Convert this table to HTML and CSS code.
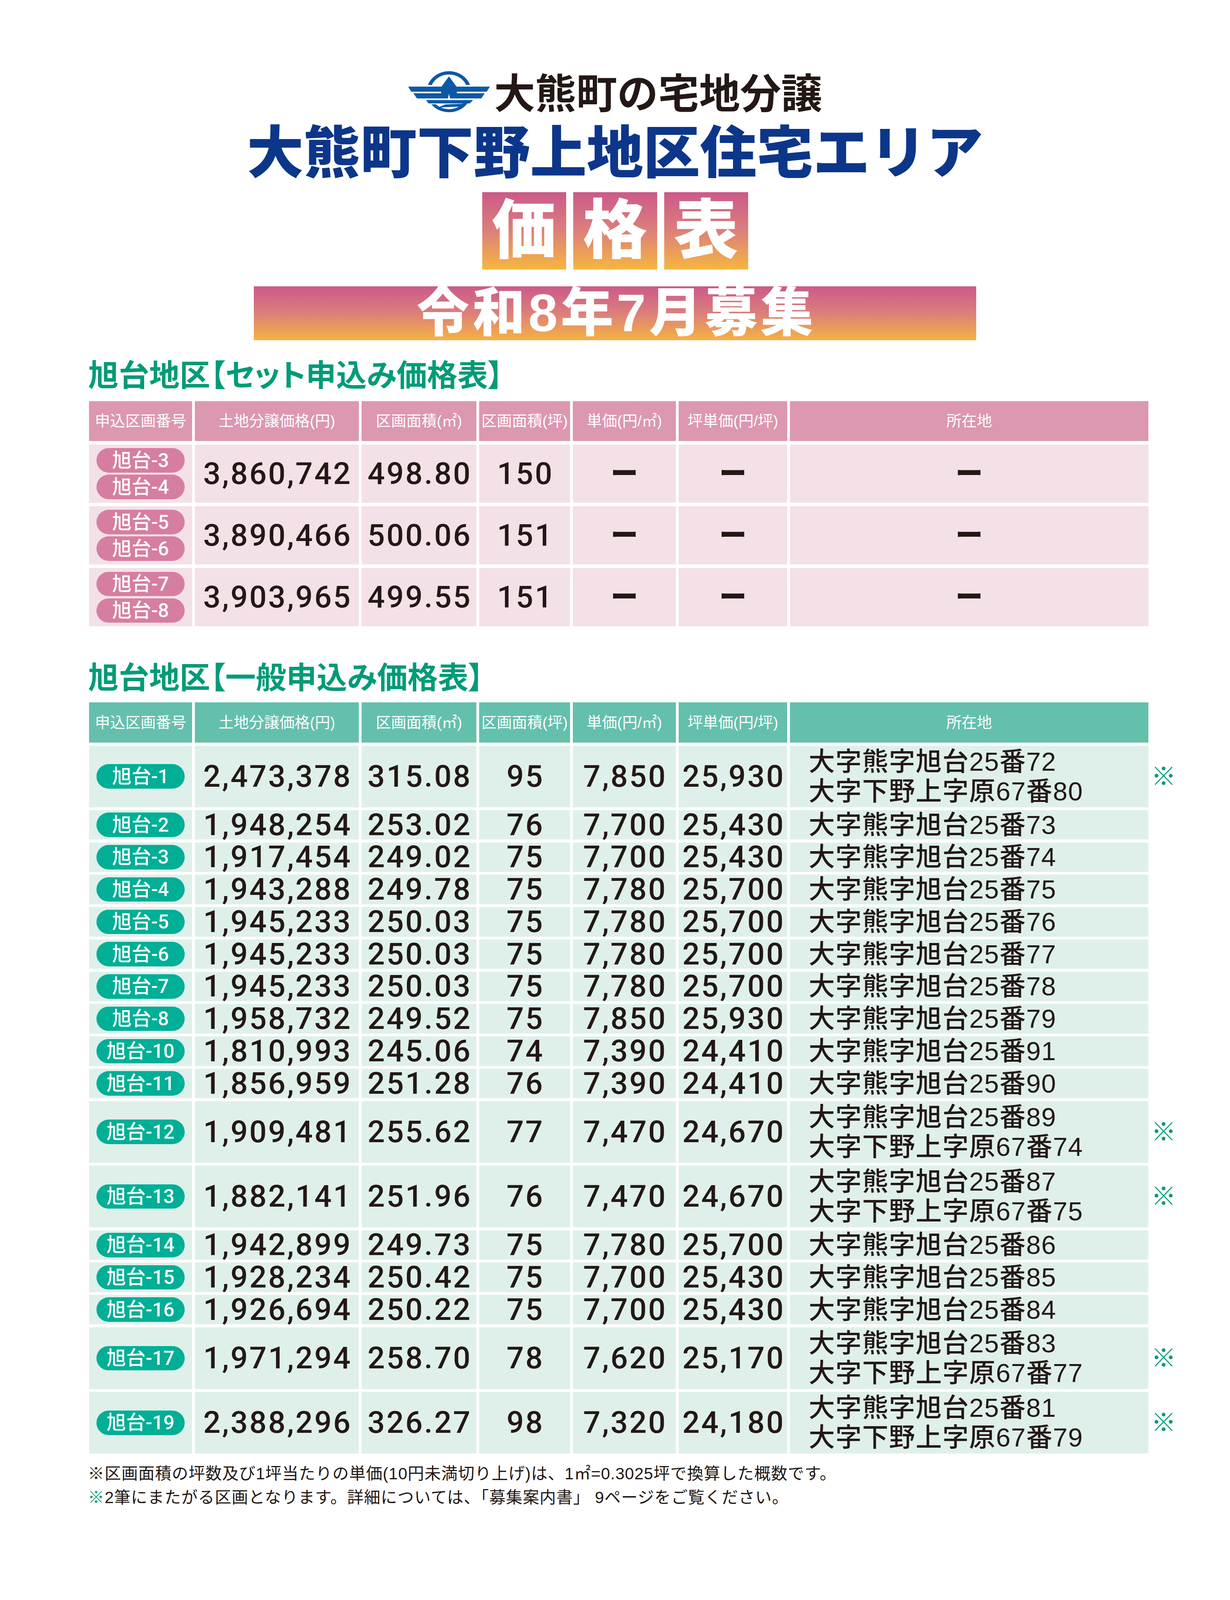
FILE: index.html
```html
<!DOCTYPE html>
<html lang="ja">
<head>
<meta charset="utf-8">
<title>大熊町下野上地区住宅エリア 価格表</title>
<link rel="stylesheet" href="styles.css">
</head>
<body>
<div class="page">
  <header class="brand">
    <svg class="logo" viewBox="28 38 644 354" preserveAspectRatio="none" aria-hidden="true">
      <g fill="#0d58a6">
        <path d="M184.7 158 A173 173 0 0 1 511.3 158 L480.5 158 A144 144 0 0 0 215.5 158 Z"/>
        <polygon points="348,86 406,172 412,272 284,272 290,172"/>
        <polygon points="32,172 665,172 640,215 55,215"/>
        <polygon points="72,228 625,228 598,272 100,272"/>
        <polygon points="170,286 535,286 508,314 190,314"/>
        <path d="M211.3 321 A173 173 0 0 0 498.7 300 L467.9 300 A147 147 0 0 1 246.2 321 Z"/>
        <polygon points="456,316 322,322 250,352 305,346 432,341"/>
      </g>
      <polygon fill="#ffffff" points="348,232 356,272 340,272"/>
    </svg>
    <span class="brand-name">大熊町の宅地分譲</span>
  </header>

  <h1 class="title">大熊町下野上地区住宅エリア</h1>

  <div class="kakaku"><span>価</span><span>格</span><span>表</span></div>

  <div class="banner">令和8年7月募集</div>

  <h2 class="sec-title first">旭台地区【セット申込み価格表】</h2>
  <div class="tbl pink">
    <div class="row head">
      <div class="cell">申込区画番号</div>
      <div class="cell">土地分譲価格(円)</div>
      <div class="cell">区画面積(㎡)</div>
      <div class="cell">区画面積(坪)</div>
      <div class="cell">単価(円/㎡)</div>
      <div class="cell">坪単価(円/坪)</div>
      <div class="cell">所在地</div>
      <div class="mk"></div>
    </div>
    <div class="row set">
      <div class="cell badges"><span class="badge">旭台-3</span><span class="badge">旭台-4</span></div>
      <div class="cell num">3,860,742</div>
      <div class="cell num">498.80</div>
      <div class="cell num">150</div>
      <div class="cell dash">ー</div>
      <div class="cell dash">ー</div>
      <div class="cell dash">ー</div>
      <div class="mk"></div>
    </div>
    <div class="row set">
      <div class="cell badges"><span class="badge">旭台-5</span><span class="badge">旭台-6</span></div>
      <div class="cell num">3,890,466</div>
      <div class="cell num">500.06</div>
      <div class="cell num">151</div>
      <div class="cell dash">ー</div>
      <div class="cell dash">ー</div>
      <div class="cell dash">ー</div>
      <div class="mk"></div>
    </div>
    <div class="row set">
      <div class="cell badges"><span class="badge">旭台-7</span><span class="badge">旭台-8</span></div>
      <div class="cell num">3,903,965</div>
      <div class="cell num">499.55</div>
      <div class="cell num">151</div>
      <div class="cell dash">ー</div>
      <div class="cell dash">ー</div>
      <div class="cell dash">ー</div>
      <div class="mk"></div>
    </div>
  </div>

  <h2 class="sec-title second">旭台地区【一般申込み価格表】</h2>
  <div class="tbl green">
    <div class="row head">
      <div class="cell">申込区画番号</div>
      <div class="cell">土地分譲価格(円)</div>
      <div class="cell">区画面積(㎡)</div>
      <div class="cell">区画面積(坪)</div>
      <div class="cell">単価(円/㎡)</div>
      <div class="cell">坪単価(円/坪)</div>
      <div class="cell">所在地</div>
      <div class="mk"></div>
    </div>

    <div class="row dbl">
      <div class="cell"><span class="badge">旭台-1</span></div>
      <div class="cell num">2,473,378</div><div class="cell num">315.08</div><div class="cell num">95</div>
      <div class="cell num">7,850</div><div class="cell num">25,930</div>
      <div class="cell addr"><span>大字熊字旭台25番72</span><span>大字下野上字原67番80</span></div>
      <div class="mk">※</div>
    </div>
    <div class="row sgl">
      <div class="cell"><span class="badge">旭台-2</span></div>
      <div class="cell num">1,948,254</div><div class="cell num">253.02</div><div class="cell num">76</div>
      <div class="cell num">7,700</div><div class="cell num">25,430</div>
      <div class="cell addr"><span>大字熊字旭台25番73</span></div>
      <div class="mk"></div>
    </div>
    <div class="row sgl">
      <div class="cell"><span class="badge">旭台-3</span></div>
      <div class="cell num">1,917,454</div><div class="cell num">249.02</div><div class="cell num">75</div>
      <div class="cell num">7,700</div><div class="cell num">25,430</div>
      <div class="cell addr"><span>大字熊字旭台25番74</span></div>
      <div class="mk"></div>
    </div>
    <div class="row sgl">
      <div class="cell"><span class="badge">旭台-4</span></div>
      <div class="cell num">1,943,288</div><div class="cell num">249.78</div><div class="cell num">75</div>
      <div class="cell num">7,780</div><div class="cell num">25,700</div>
      <div class="cell addr"><span>大字熊字旭台25番75</span></div>
      <div class="mk"></div>
    </div>
    <div class="row sgl">
      <div class="cell"><span class="badge">旭台-5</span></div>
      <div class="cell num">1,945,233</div><div class="cell num">250.03</div><div class="cell num">75</div>
      <div class="cell num">7,780</div><div class="cell num">25,700</div>
      <div class="cell addr"><span>大字熊字旭台25番76</span></div>
      <div class="mk"></div>
    </div>
    <div class="row sgl">
      <div class="cell"><span class="badge">旭台-6</span></div>
      <div class="cell num">1,945,233</div><div class="cell num">250.03</div><div class="cell num">75</div>
      <div class="cell num">7,780</div><div class="cell num">25,700</div>
      <div class="cell addr"><span>大字熊字旭台25番77</span></div>
      <div class="mk"></div>
    </div>
    <div class="row sgl">
      <div class="cell"><span class="badge">旭台-7</span></div>
      <div class="cell num">1,945,233</div><div class="cell num">250.03</div><div class="cell num">75</div>
      <div class="cell num">7,780</div><div class="cell num">25,700</div>
      <div class="cell addr"><span>大字熊字旭台25番78</span></div>
      <div class="mk"></div>
    </div>
    <div class="row sgl">
      <div class="cell"><span class="badge">旭台-8</span></div>
      <div class="cell num">1,958,732</div><div class="cell num">249.52</div><div class="cell num">75</div>
      <div class="cell num">7,850</div><div class="cell num">25,930</div>
      <div class="cell addr"><span>大字熊字旭台25番79</span></div>
      <div class="mk"></div>
    </div>
    <div class="row sgl">
      <div class="cell"><span class="badge">旭台-10</span></div>
      <div class="cell num">1,810,993</div><div class="cell num">245.06</div><div class="cell num">74</div>
      <div class="cell num">7,390</div><div class="cell num">24,410</div>
      <div class="cell addr"><span>大字熊字旭台25番91</span></div>
      <div class="mk"></div>
    </div>
    <div class="row sgl">
      <div class="cell"><span class="badge">旭台-11</span></div>
      <div class="cell num">1,856,959</div><div class="cell num">251.28</div><div class="cell num">76</div>
      <div class="cell num">7,390</div><div class="cell num">24,410</div>
      <div class="cell addr"><span>大字熊字旭台25番90</span></div>
      <div class="mk"></div>
    </div>
    <div class="row dbl">
      <div class="cell"><span class="badge">旭台-12</span></div>
      <div class="cell num">1,909,481</div><div class="cell num">255.62</div><div class="cell num">77</div>
      <div class="cell num">7,470</div><div class="cell num">24,670</div>
      <div class="cell addr"><span>大字熊字旭台25番89</span><span>大字下野上字原67番74</span></div>
      <div class="mk">※</div>
    </div>
    <div class="row dbl">
      <div class="cell"><span class="badge">旭台-13</span></div>
      <div class="cell num">1,882,141</div><div class="cell num">251.96</div><div class="cell num">76</div>
      <div class="cell num">7,470</div><div class="cell num">24,670</div>
      <div class="cell addr"><span>大字熊字旭台25番87</span><span>大字下野上字原67番75</span></div>
      <div class="mk">※</div>
    </div>
    <div class="row sgl">
      <div class="cell"><span class="badge">旭台-14</span></div>
      <div class="cell num">1,942,899</div><div class="cell num">249.73</div><div class="cell num">75</div>
      <div class="cell num">7,780</div><div class="cell num">25,700</div>
      <div class="cell addr"><span>大字熊字旭台25番86</span></div>
      <div class="mk"></div>
    </div>
    <div class="row sgl">
      <div class="cell"><span class="badge">旭台-15</span></div>
      <div class="cell num">1,928,234</div><div class="cell num">250.42</div><div class="cell num">75</div>
      <div class="cell num">7,700</div><div class="cell num">25,430</div>
      <div class="cell addr"><span>大字熊字旭台25番85</span></div>
      <div class="mk"></div>
    </div>
    <div class="row sgl">
      <div class="cell"><span class="badge">旭台-16</span></div>
      <div class="cell num">1,926,694</div><div class="cell num">250.22</div><div class="cell num">75</div>
      <div class="cell num">7,700</div><div class="cell num">25,430</div>
      <div class="cell addr"><span>大字熊字旭台25番84</span></div>
      <div class="mk"></div>
    </div>
    <div class="row dbl">
      <div class="cell"><span class="badge">旭台-17</span></div>
      <div class="cell num">1,971,294</div><div class="cell num">258.70</div><div class="cell num">78</div>
      <div class="cell num">7,620</div><div class="cell num">25,170</div>
      <div class="cell addr"><span>大字熊字旭台25番83</span><span>大字下野上字原67番77</span></div>
      <div class="mk">※</div>
    </div>
    <div class="row dbl">
      <div class="cell"><span class="badge">旭台-19</span></div>
      <div class="cell num">2,388,296</div><div class="cell num">326.27</div><div class="cell num">98</div>
      <div class="cell num">7,320</div><div class="cell num">24,180</div>
      <div class="cell addr"><span>大字熊字旭台25番81</span><span>大字下野上字原67番79</span></div>
      <div class="mk">※</div>
    </div>
  </div>

  <div class="notes">
    <p>※区画面積の坪数及び1坪当たりの単価(10円未満切り上げ)は、1㎡=0.3025坪で換算した概数です。</p>
    <p><span class="g">※</span>2筆にまたがる区画となります。詳細については、「募集案内書」 9ページをご覧ください。</p>
  </div>
</div>
</body>
</html>
```

FILE: styles.css
```css
/* The sheet is drawn on a 3150 x 4455 artboard.
   --u is one artboard unit across, --v one artboard unit down,
   so the whole sheet always fills the window it is shown in. */
:root {
  --u: calc(100vw / 3150);
  --v: calc(100vh / 4455);
}

* {
  box-sizing: border-box;
  margin: 0;
  padding: 0;
}

html {
  overflow: hidden;
  background: #ffffff;
}

body {
  font-family: "Liberation Sans", "Noto Sans CJK JP", sans-serif;
  color: #231815;
  background: #ffffff;
}

.page {
  width: calc(3150 * var(--u));
  height: calc(4455 * var(--v));
  padding-top: calc(193 * var(--v));
}

/* ---------- header ---------- */
.brand {
  display: flex;
  justify-content: center;
  align-items: center;
  gap: calc(8 * var(--u));
  height: calc(125 * var(--v));
}

.logo {
  display: block;
  width: calc(213 * var(--u));
  height: calc(117 * var(--v));
}

.brand-name {
  padding-top: calc(12 * var(--v));
  font-size: calc(105 * var(--u));
  line-height: 1;
  font-weight: 700;
  color: #231815;
}

.title {
  margin-top: calc(38 * var(--v));
  height: calc(145 * var(--v));
  display: flex;
  align-items: center;
  justify-content: center;
  font-size: calc(145 * var(--u));
  line-height: 1;
  font-weight: 900;
  color: #0c3689;
}

.kakaku {
  margin-top: calc(34 * var(--v));
  display: flex;
  justify-content: center;
  gap: calc(18 * var(--u));
}

.kakaku span {
  width: calc(215 * var(--u));
  height: calc(215 * var(--v));
  display: flex;
  align-items: center;
  justify-content: center;
  background: linear-gradient(180deg, #cb5a8a 0%, #dc7f7a 50%, #f6b640 100%);
  color: #ffffff;
  font-size: calc(165 * var(--u));
  line-height: 1;
  font-weight: 900;
}

.banner {
  margin: calc(47 * var(--v)) auto 0;
  width: calc(1850 * var(--u));
  height: calc(150 * var(--v));
  display: flex;
  align-items: center;
  justify-content: center;
  background: linear-gradient(180deg, #cb5a8a 0%, #dc7f7a 50%, #f5b242 100%);
  color: #ffffff;
  font-size: calc(135 * var(--u));
  line-height: 1;
  font-weight: 900;
  letter-spacing: calc(8 * var(--u));
  padding-left: calc(8 * var(--u));
}

/* ---------- section titles ---------- */
.sec-title {
  padding-left: calc(226 * var(--u));
  height: calc(78 * var(--v));
  display: flex;
  align-items: center;
  font-size: calc(78 * var(--u));
  line-height: 1;
  font-weight: 700;
  font-feature-settings: "palt" 1;
  color: #009b77;
}

.sec-title.first {
  margin-top: calc(60 * var(--v));
}

.sec-title.second {
  margin-top: calc(105 * var(--v));
}

/* ---------- tables ---------- */
.tbl {
  padding-left: calc(228 * var(--u));
  display: flex;
  flex-direction: column;
}

.tbl.pink {
  margin-top: calc(32 * var(--v));
  gap: calc(10 * var(--v));
}

.tbl.green {
  margin-top: calc(29 * var(--v));
  gap: calc(8 * var(--v));
}

.row {
  display: grid;
  grid-template-columns:
    calc(264 * var(--u)) calc(420 * var(--u)) calc(294 * var(--u))
    calc(233 * var(--u)) calc(264 * var(--u)) calc(278 * var(--u))
    calc(918 * var(--u)) calc(60 * var(--u));
  grid-template-rows: minmax(0, 1fr);
  column-gap: calc(7 * var(--u));
  line-height: 1;
}

.row.head {
  height: calc(111 * var(--v));
}

.green .row.head {
  height: calc(112 * var(--v));
}

.row.set {
  height: calc(162 * var(--v));
}

.row.sgl {
  height: calc(82 * var(--v));
}

.row.dbl {
  height: calc(172 * var(--v));
}

.cell {
  display: flex;
  align-items: center;
  justify-content: center;
  min-height: 0;
}

.head .cell {
  color: #ffffff;
  font-size: calc(39 * var(--u));
  font-weight: 400;
  white-space: nowrap;
}

.pink .cell {
  background: #f3e1e7;
}

.pink .row.head .cell {
  background: #dc97b1;
}

.green .cell {
  background: #dff0ea;
}

.green .row.head .cell {
  background: #64c0ac;
}

.num {
  font-family: Roboto, "Noto Sans CJK JP", sans-serif;
  font-size: calc(78 * var(--u));
  font-weight: 500;
  letter-spacing: calc(4 * var(--u));
  padding-left: calc(4 * var(--u));
  white-space: nowrap;
  color: #231815;
}

.dash {
  font-size: calc(70 * var(--u));
  font-weight: 900;
  color: #231815;
}

.badges {
  flex-direction: column;
  gap: calc(6 * var(--v));
}

.badge {
  width: calc(226 * var(--u));
  height: calc(68 * var(--v));
  border-radius: 999px;
  display: flex;
  align-items: center;
  justify-content: center;
  color: #ffffff;
  font-family: Roboto, "Noto Sans CJK JP", sans-serif;
  font-size: calc(50 * var(--u));
  font-weight: 500;
  line-height: 1;
  white-space: nowrap;
}

.pink .badge {
  background: #d67ea1;
}

.green .badge {
  background: #00af96;
}

.addr {
  flex-direction: column;
  align-items: flex-start;
  justify-content: center;
  padding-left: calc(48 * var(--u));
  font-size: calc(67 * var(--u));
  line-height: calc(76 * var(--u));
  font-weight: 500;
  letter-spacing: calc(1.5 * var(--u));
  white-space: nowrap;
}

.mk {
  display: flex;
  align-items: center;
  color: #009b77;
  font-size: calc(64 * var(--u));
  font-weight: 900;
  line-height: 1;
}

/* ---------- notes ---------- */
.notes {
  margin-top: calc(24 * var(--v));
  padding-left: calc(225 * var(--u));
  font-size: calc(42 * var(--u));
  line-height: calc(66 * var(--v));
  letter-spacing: calc(1 * var(--u));
  color: #231815;
}

.notes .g {
  color: #009b77;
}
```
